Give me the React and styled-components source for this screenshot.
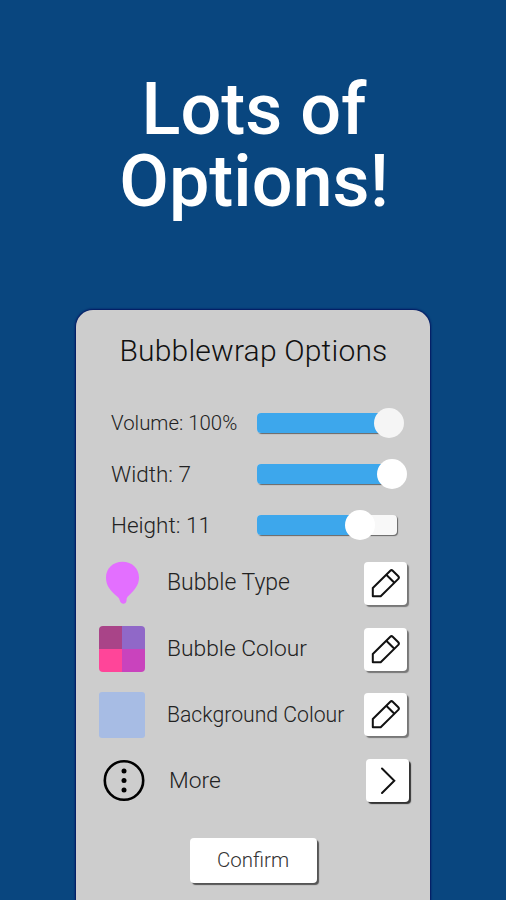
import styled, { createGlobalStyle } from 'styled-components'


const sliders = [
  { label: 'Volume: 100%', size: 20.4, fill: 132, thumb: '#f5f5f5' },
  { label: 'Width: 7', size: 22.5, fill: 134.5, thumb: '#fff' },
  { label: 'Height: 11', size: 22.5, fill: 102.5, thumb: '#fff' },
]


function App() {
  return (
    <Page>
      <GlobalStyle />
      <Headline>Lots of<br />Options!</Headline>
      <Panel>
        <PanelTitle>Bubblewrap Options</PanelTitle>

        {/* sliders */}
        <SliderList>
          {
            sliders.map((a) => (
              <SliderRow key={a.label}>
                <Label $size={a.size}>{a.label}</Label>
                <Track>
                  <Fill style={{ width: a.fill }} />
                  <Thumb $color={a.thumb} style={{ left: a.fill - 15 }} />
                </Track>
              </SliderRow>
            ))
          }
        </SliderList>

        {/* options */}
        <OptionRow>
          <IconCell><BalloonIcon /></IconCell>
          <Label $size={23}>Bubble Type</Label>
          <SquareButton aria-label="Edit bubble type"><PencilIcon /></SquareButton>
        </OptionRow>
        <OptionRow>
          <IconCell>
            <ColourGrid>
              <Colour $color="#a94488" />
              <Colour $color="#9068c8" />
              <Colour $color="#ff4599" />
              <Colour $color="#c943bd" />
            </ColourGrid>
          </IconCell>
          <Label $size={22.8}>Bubble Colour</Label>
          <SquareButton aria-label="Edit bubble colour"><PencilIcon /></SquareButton>
        </OptionRow>
        <OptionRow>
          <IconCell><Swatch /></IconCell>
          <Label $size={21.2}>Background Colour</Label>
          <SquareButton aria-label="Edit background colour"><PencilIcon /></SquareButton>
        </OptionRow>
        <OptionRow $shift={2}>
          <IconCell><MoreIcon /></IconCell>
          <Label $size={22.8}>More</Label>
          <SquareButton $dark aria-label="Open more"><ChevronIcon /></SquareButton>
        </OptionRow>

        <ConfirmButton>Confirm</ConfirmButton>
      </Panel>
    </Page>
  )
}


// icons
function BalloonIcon() {
  return (
    <svg width="46" height="46" viewBox="0 0 46 46">
      <path d="M23.5 1.8C33 1.8 40 8.5 40 17.5C40 25.5 35.5 30 28.8 36.5Q27.3 38 27.5 40.5C27.6 42.5 25.8 43.8 24.5 43.8C22.8 43.8 21 42.3 20.6 40Q20.3 38.3 18.5 36.8C11 30.5 7 25.5 7 17.5C7 8.5 14 1.8 23.5 1.8Z" fill="#e36fff" />
    </svg>
  )
}

function PencilIcon() {
  return (
    <svg width="43" height="43" viewBox="0 0 43 43" fill="none" stroke="#111" strokeWidth="2" strokeLinejoin="round">
      <path d="M8.8 34.2V26L26.3 8.7Q27.5 7.5 28.7 8.7L34.3 14.3Q35.5 15.5 34.3 16.9L16.7 34.2Z" />
      <path d="M22.3 12.7L30.4 20.8" />
    </svg>
  )
}

function MoreIcon() {
  return (
    <svg width="46" height="46" viewBox="0 0 46 46">
      <circle cx="23" cy="22.5" r="19.2" fill="none" stroke="#000" strokeWidth="2.6" />
      <circle cx="23" cy="13" r="2.5" />
      <circle cx="23" cy="22.5" r="2.5" />
      <circle cx="23" cy="32" r="2.5" />
    </svg>
  )
}

function ChevronIcon() {
  return (
    <svg width="43" height="43" viewBox="0 0 43 43" fill="none" stroke="#111" strokeWidth="2" strokeLinecap="round">
      <path d="M16 9.5L28.3 21.7L16 34" />
    </svg>
  )
}


// styled components
const GlobalStyle = createGlobalStyle`
  body {
    margin: 0;
    background: #09467f;
    font-family: Roboto, sans-serif;
  }
  * {
    box-sizing: border-box;
  }
`

const Page = styled.main`
  width: 506px;
  height: 900px;
  overflow: hidden;
  display: flex;
  flex-direction: column;
  align-items: center;
  background: #09467f;
`

const Headline = styled.h1`
  height: 310px;
  margin: 0;
  padding: 74px 0 0 2px;
  font-size: 72px;
  font-weight: 500;
  line-height: 72px;
  text-align: center;
  color: #fff;
`

const Panel = styled.section`
  width: 354px;
  height: 590px;
  flex: none;
  display: flex;
  flex-direction: column;
  border-radius: 17px 17px 0 0;
  background: #cdcdcd;
  box-shadow: 0 0 2px 1px #04145f;
`

const PanelTitle = styled.h2`
  height: 88px;
  margin: 0;
  padding: 21px 0 0 1px;
  font-size: 30px;
  font-weight: 300;
  line-height: 40px;
  letter-spacing: 0.2px;
  text-align: center;
  color: #111;
`

const SliderList = styled.div`
  padding-left: 35px;
`

const SliderRow = styled.div`
  display: grid;
  grid-template-columns: 146px 140px;
  align-items: center;
  height: 50.8px;
`

const Label = styled.span`
  font-size: ${(p) => p.$size}px;
  font-weight: 300;
  line-height: 30px;
  white-space: nowrap;
  color: #222;
`

const Track = styled.div`
  position: relative;
  height: 20px;
  border-radius: 4px;
  background: #f8f8f8;
  box-shadow: 1px 1px 1px #666;
`

const Fill = styled.div`
  height: 20px;
  border-radius: 4px 0 0 4px;
  background: #3da7ec;
`

const Thumb = styled.div`
  position: absolute;
  top: -5px;
  width: 30px;
  height: 30px;
  border-radius: 50%;
  background: ${(p) => p.$color};
`

const OptionRow = styled.div`
  display: grid;
  grid-template-columns: 68px 197px 43px;
  align-items: center;
  height: 65.8px;
  padding-left: ${(p) => 23 + (p.$shift || 0)}px;
`

const IconCell = styled.div`
  display: flex;
  width: 46px;
`

const ColourGrid = styled.div`
  width: 46px;
  height: 46px;
  display: grid;
  grid-template-columns: 1fr 1fr;
  border-radius: 4px;
  overflow: hidden;
`

const Colour = styled.div`
  background: ${(p) => p.$color};
`

const Swatch = styled.div`
  width: 46px;
  height: 46px;
  border-radius: 3px;
  background: #a7bce4;
`

const SquareButton = styled.button`
  width: 43px;
  height: 43px;
  display: flex;
  padding: 0;
  border: 0;
  border-radius: 4px;
  background: #fff;
  box-shadow: 2px 2px 1px ${(p) => (p.$dark ? '#333' : '#777')};
`

const ConfirmButton = styled.button`
  width: 127px;
  height: 45px;
  flex: none;
  align-self: center;
  margin-top: 24px;
  padding: 0;
  border: 0;
  border-radius: 4px;
  background: #fff;
  box-shadow: 2px 2px 1px #555;
  font-family: inherit;
  font-size: 20.5px;
  font-weight: 300;
  color: #333;
`


export default App
